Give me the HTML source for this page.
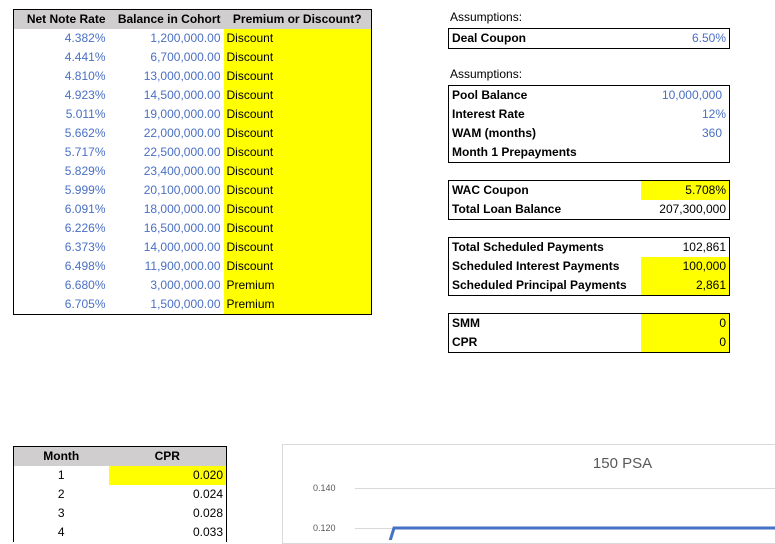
<!DOCTYPE html><html><head><style>
body{margin:0;width:775px;height:540px;background:#fff;font-family:"Liberation Sans",sans-serif;font-size:12px;position:relative;overflow:hidden;color:#000}
.a{position:absolute;box-sizing:border-box}
table{border-collapse:collapse;position:absolute;table-layout:fixed}
td{height:19px;padding:0 3px;white-space:nowrap;line-height:19px;box-sizing:border-box}
.b{color:#4a6fc4}.r{text-align:right}.y{background:#ff0}.h{background:#d0cece;font-weight:bold}.c{text-align:center}
.box{border:1px solid #000}
.box td{height:19px;font-weight:bold}
.box td.v{font-weight:normal}
</style></head><body>
<table style="left:13px;top:9px;border:1px solid #000;width:358px">
<tr class="h"><td style="width:95px" class="r">Net Note Rate</td><td style="width:115px" class="r">Balance in Cohort</td><td style="width:148px" class="c">Premium or Discount?</td></tr>
<tr><td class="r b">4.382%</td><td class="r b">1,200,000.00</td><td class="y">Discount</td></tr>
<tr><td class="r b">4.441%</td><td class="r b">6,700,000.00</td><td class="y">Discount</td></tr>
<tr><td class="r b">4.810%</td><td class="r b">13,000,000.00</td><td class="y">Discount</td></tr>
<tr><td class="r b">4.923%</td><td class="r b">14,500,000.00</td><td class="y">Discount</td></tr>
<tr><td class="r b">5.011%</td><td class="r b">19,000,000.00</td><td class="y">Discount</td></tr>
<tr><td class="r b">5.662%</td><td class="r b">22,000,000.00</td><td class="y">Discount</td></tr>
<tr><td class="r b">5.717%</td><td class="r b">22,500,000.00</td><td class="y">Discount</td></tr>
<tr><td class="r b">5.829%</td><td class="r b">23,400,000.00</td><td class="y">Discount</td></tr>
<tr><td class="r b">5.999%</td><td class="r b">20,100,000.00</td><td class="y">Discount</td></tr>
<tr><td class="r b">6.091%</td><td class="r b">18,000,000.00</td><td class="y">Discount</td></tr>
<tr><td class="r b">6.226%</td><td class="r b">16,500,000.00</td><td class="y">Discount</td></tr>
<tr><td class="r b">6.373%</td><td class="r b">14,000,000.00</td><td class="y">Discount</td></tr>
<tr><td class="r b">6.498%</td><td class="r b">11,900,000.00</td><td class="y">Discount</td></tr>
<tr><td class="r b">6.680%</td><td class="r b">3,000,000.00</td><td class="y">Premium</td></tr>
<tr><td class="r b">6.705%</td><td class="r b">1,500,000.00</td><td class="y">Premium</td></tr>
</table>

<div class="a" style="left:450px;top:10px">Assumptions:</div>
<table class="box" style="left:448px;top:28px;width:282px"><tr><td style="width:192px">Deal Coupon</td><td class="v r b">6.50%</td></tr></table>
<div class="a" style="left:450px;top:67px">Assumptions:</div>
<table class="box" style="left:448px;top:85px;width:282px">
<tr><td style="width:192px">Pool Balance</td><td class="v r b" style="padding-right:7px">10,000,000</td></tr>
<tr><td>Interest Rate</td><td class="v r b">12%</td></tr>
<tr><td>WAM (months)</td><td class="v r b" style="padding-right:7px">360</td></tr>
<tr><td>Month 1 Prepayments</td><td></td></tr></table>
<table class="box" style="left:448px;top:180px;width:282px">
<tr><td style="width:192px">WAC Coupon</td><td class="v r y">5.708%</td></tr>
<tr><td>Total Loan Balance</td><td class="v r">207,300,000</td></tr></table>
<table class="box" style="left:448px;top:237px;width:282px">
<tr><td style="width:192px">Total Scheduled Payments</td><td class="v r">102,861</td></tr>
<tr><td>Scheduled Interest Payments</td><td class="v r y">100,000</td></tr>
<tr><td>Scheduled Principal Payments</td><td class="v r y">2,861</td></tr></table>
<table class="box" style="left:448px;top:313px;width:282px">
<tr><td style="width:192px">SMM</td><td class="v r y">0</td></tr>
<tr><td>CPR</td><td class="v r y">0</td></tr></table>

<table style="left:13px;top:446px;width:214px;border:1px solid #000;border-bottom:none">
<tr class="h"><td style="width:95px" class="c">Month</td><td class="c">CPR</td></tr>
<tr><td class="c">1</td><td class="r y">0.020</td></tr>
<tr><td class="c">2</td><td class="r">0.024</td></tr>
<tr><td class="c">3</td><td class="r">0.028</td></tr>
<tr><td class="c">4</td><td class="r">0.033</td></tr>
</table>

<div class="a" style="left:282px;top:444px;width:500px;height:100px;border:1px solid #d9d9d9"></div>
<div class="a" style="left:560px;top:455px;width:125px;text-align:center;font-size:15px;color:#595959">150 PSA</div>
<div class="a" style="left:313px;top:483px;font-size:9px;color:#595959">0.140</div>
<div class="a" style="left:313px;top:523px;font-size:9px;color:#595959">0.120</div>
<div class="a" style="left:355px;top:488px;width:420px;height:1px;background:#d9d9d9"></div>
<div class="a" style="left:355px;top:528px;width:420px;height:1px;background:#d9d9d9"></div>
<svg class="a" style="left:0;top:0" width="775" height="540"><path d="M390 541 L394 528 L776 528" stroke="#4472c4" stroke-width="3" fill="none"/></svg>
</body></html>
